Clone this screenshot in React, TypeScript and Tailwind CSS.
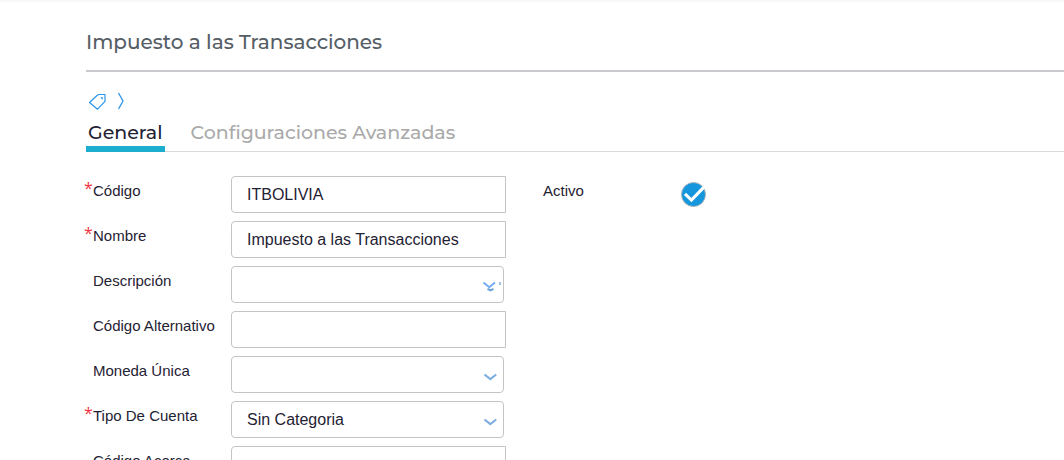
import { useState } from "react";
import type { ReactNode } from "react";

interface FieldDef {
  id: string;
  label: string;
  kind: "text" | "select";
  value?: string;
  required?: boolean;
  translatable?: boolean;
}

const FIELDS: FieldDef[] = [
  { id: "codigo", label: "Código", kind: "text", value: "ITBOLIVIA", required: true },
  { id: "nombre", label: "Nombre", kind: "text", value: "Impuesto a las Transacciones", required: true },
  { id: "descripcion", label: "Descripción", kind: "select", translatable: true },
  { id: "codigo-alternativo", label: "Código Alternativo", kind: "text" },
  { id: "moneda", label: "Moneda Única", kind: "select" },
  { id: "tipo-cuenta", label: "Tipo De Cuenta", kind: "select", value: "Sin Categoria", required: true },
  { id: "codigo-acerca", label: "Código Acerca", kind: "text" },
];

const TABS = ["General", "Configuraciones Avanzadas"];

function TagIcon() {
  return (
    <svg className="h-5 w-5" viewBox="0 0 20 20" fill="none" stroke="#2b95e9" strokeWidth="1.2">
      <path d="M9 4.5 10.5 3.5H17v6.8L9.5 18.2 1.5 11.5z" strokeLinejoin="round" />
      <path d="M12.8 6.9h1.4v1.4" />
    </svg>
  );
}

function CrumbIcon() {
  return (
    <svg className="h-5 w-2" viewBox="0 0 8 20" fill="none" stroke="#2b95e9" strokeWidth="1.3">
      <path d="M2.5 2 7 10 2.5 18" />
    </svg>
  );
}

function SelectArrow({ translatable }: { translatable?: boolean }) {
  return (
    <svg
      className="pointer-events-none absolute right-0 bottom-2 h-5 w-6"
      viewBox="0 0 24 20"
      fill="none"
    >
      {translatable ? (
        <>
          <path d="M3.5 7.5 9.3 12.3l5.7-4.8" stroke="#75adf5" strokeWidth="2" />
          <path d="M7.5 13.8l3 1.6 3-1.6" stroke="#6da3d8" strokeWidth="2" />
          <path d="M20 7v3" stroke="#6da3d8" strokeWidth="1.3" />
        </>
      ) : (
        <path d="M4.5 9.5 10.3 14l5.9-4.5" stroke="#7eaee0" strokeWidth="2.2" />
      )}
    </svg>
  );
}

function Label({ htmlFor, required, children }: { htmlFor: string; required?: boolean; children: ReactNode }) {
  return (
    <label htmlFor={htmlFor} className="relative pt-[5px] text-[15px] leading-5 whitespace-nowrap">
      {required && <span className="absolute top-0.5 -left-[9px] font-['Open_Sans',sans-serif] text-base leading-5 text-[#ef3340]">*</span>}
      {children}
    </label>
  );
}

function Field({ field }: { field: FieldDef }) {
  return (
    <div className="grid grid-cols-[138px_275px]">
      <Label htmlFor={field.id} required={field.required}>{field.label}</Label>
      {field.kind === "text" ? (
        <input
          id={field.id}
          type="text"
          defaultValue={field.value}
          className="h-[37px] w-full rounded-l border border-[#c4c4c4] bg-white px-[15px] text-base outline-none focus:border-[#1caecf]"
        />
      ) : (
        <div className="relative mr-0.5">
          <select
            id={field.id}
            className="h-[37px] w-full appearance-none rounded border border-[#c4c4c4] bg-white px-[15px] text-base outline-none focus:border-[#1caecf]"
          >
            <option>{field.value ?? ""}</option>
          </select>
          <SelectArrow translatable={field.translatable} />
        </div>
      )}
    </div>
  );
}

export default function App() {
  const [tab, setTab] = useState(TABS[0]);
  const [active, setActive] = useState(true);

  return (
    <div className="h-screen overflow-hidden border-t-2 border-[#f8f8f8] bg-white pl-[86px] font-['Liberation_Sans',Arial,sans-serif] text-[#1f2233]">
      <header className="border-b-2 border-[#cacace] pt-6 pb-3">
        <h1 className="font-[Montserrat,Inter,sans-serif] text-xl leading-8 font-medium text-[#555e66]">
          Impuesto a las Transacciones
        </h1>
      </header>

      <nav className="mt-[19px] flex h-5 items-center gap-2 pl-0.5">
        <TagIcon />
        <CrumbIcon />
      </nav>

      <div role="tablist" className="mt-[9px] flex gap-6 border-b border-[#dadada] font-[Montserrat,Inter,sans-serif] text-[19px] leading-[26px] font-medium">
        {TABS.map((name) => (
          <button
            key={name}
            type="button"
            role="tab"
            aria-selected={tab === name}
            onClick={() => setTab(name)}
            className={
              tab === name
                ? "-mb-px border-b-6 border-[#1caecf] px-0.5 text-[#1f2233]"
                : "-mb-px border-b-6 border-transparent px-0.5 text-[#aaaaaa]"
            }
          >
            {name}
          </button>
        ))}
      </div>

      <form className="mt-6 flex gap-[37px] pl-[7px]">
        <div className="flex flex-col gap-2">
          {FIELDS.map((field) => (
            <Field key={field.id} field={field} />
          ))}
        </div>

        <div className="grid grid-cols-[138px_auto] content-start">
          <Label htmlFor="activo">Activo</Label>
          <span className="relative mt-1.5 flex h-[25px] w-[25px]">
            <input
              id="activo"
              type="checkbox"
              checked={active}
              onChange={(e) => setActive(e.target.checked)}
              className="h-full w-full appearance-none rounded-full border border-[#a8b4bc] checked:bg-[#1696dc]"
            />
            {active && (
              <svg className="pointer-events-none absolute inset-0 h-full w-full" viewBox="0 0 24 24" fill="none">
                <path d="M3.8 11.5 10 17.3 21.8 5.2" stroke="#fff" strokeWidth="3" />
              </svg>
            )}
          </span>
        </div>
      </form>
    </div>
  );
}
